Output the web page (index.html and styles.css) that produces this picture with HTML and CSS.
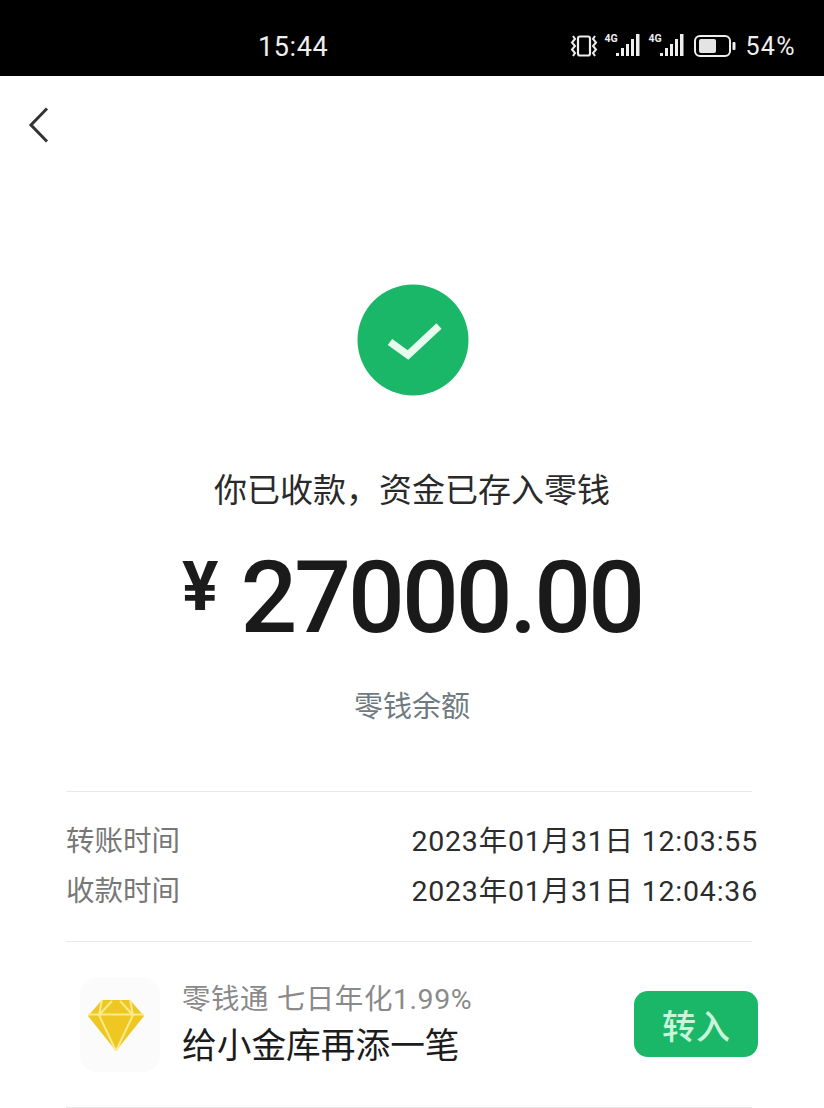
FILE: index.html
```html
<!DOCTYPE html>
<html lang="zh">
<head>
<meta charset="utf-8">
<title>收款</title>
<link rel="stylesheet" href="styles.css">
</head>
<body>
<div class="page">
  <header class="status">
    <span class="time">15:44</span>
    <div class="status-right">
      <svg class="ic-vib" viewBox="0 0 30 24" width="30" height="24"><g fill="none" stroke="#eee"><rect x="9" y="2.500" width="12" height="19" rx="2" stroke-width="2.200"/><path d="M4 2l2 3-3 3.500 3 3.500-3 3.500 3 3.500-2 3M26 2l-2 3 3 3.500-3 3.500 3 3.500-3 3.500 2 3" stroke-width="2"/></g></svg>
      <div class="sig">
        <span class="g4">4G</span>
        <svg viewBox="0 0 24 24" width="24" height="24"><g fill="#eee"><rect x="0" y="19" width="3" height="3"/><rect x="5" y="14" width="3" height="8"/><rect x="10" y="10" width="3" height="12"/><rect x="15" y="5" width="3" height="17"/><rect x="20" y="0" width="3.500" height="22"/></g></svg>
      </div>
      <div class="sig">
        <span class="g4">4G</span>
        <svg viewBox="0 0 24 24" width="24" height="24"><g fill="#eee"><rect x="0" y="19" width="3" height="3"/><rect x="5" y="14" width="3" height="8"/><rect x="10" y="10" width="3" height="12"/><rect x="15" y="5" width="3" height="17"/><rect x="20" y="0" width="3.500" height="22"/></g></svg>
      </div>
      <svg class="ic-bat" viewBox="0 0 42 22" width="42" height="22"><rect x="1" y="1" width="35" height="20" rx="5" fill="none" stroke="#eee" stroke-width="2"/><rect x="5" y="4" width="17" height="14" rx="2" fill="#e4e4e4"/><rect x="38.500" y="7" width="3" height="8" rx="1" fill="#eee"/></svg>
      <span class="pct">54%</span>
    </div>
  </header>

  <nav class="nav">
    <svg viewBox="0 0 22 38" width="22" height="38"><path d="M19 2.500L3 19l16 16.500" fill="none" stroke="#333" stroke-width="3"/></svg>
  </nav>

  <main class="main">
    <svg class="ok" viewBox="0 0 112 112" width="112" height="112"><circle cx="56" cy="56" r="55.500" fill="#1bb768"/><path d="M33 58L51 71 82 42" fill="none" stroke="#e6fbee" stroke-width="7.500"/></svg>
    <p class="title">你已收款，资金已存入零钱</p>
    <div class="amount"><span class="yen">¥</span><span class="num">27000.00</span></div>
    <p class="balance">零钱余额</p>
  </main>

  <section class="times">
    <div class="row"><span class="k">转账时间</span><span class="v">2023年01月31日 12:03:55</span></div>
    <div class="row"><span class="k">收款时间</span><span class="v">2023年01月31日 12:04:36</span></div>
  </section>

  <section class="promo">
    <div class="tile">
      <svg viewBox="0 0 56 52" width="56" height="52"><path d="M14 1h28l14 16-28 35L0 17z" fill="#eec722"/><path d="M0 15.500h56M14 1l-3 15 17 36 17-36-3-15M11 16L24 2M45 16L32 2" fill="none" stroke="#fbeb8a" stroke-width="2"/></svg>
    </div>
    <div class="info">
      <p class="sub">零钱通 七日年化1.99%</p>
      <p class="head">给小金库再添一笔</p>
    </div>
    <button class="btn" type="button">转入</button>
  </section>
</div>
</body>
</html>
```
FILE: styles.css
```css
* { box-sizing: border-box; }
html, body { margin: 0; padding: 0; background: #fff; }
body { font-family: "Roboto", "Noto Sans CJK SC", sans-serif; color: #1c1c1c; }
p { margin: 0; }
.page { width: 824px; height: 1108px; overflow: hidden; }

.status { height: 76px; background: #000; color: #eee; display: flex; align-items: center; padding: 0 28px 0 258px; justify-content: space-between; }
.time { font-size: 27px; font-weight: 400; line-height: 1; margin-top: 19px; letter-spacing: .6px; }
.status-right { display: flex; align-items: center; margin-top: 16px; }
.sig { display: flex; position: relative; width: 36px; height: 24px; justify-content: flex-end; margin-left: 8px; }
.ic-vib + .sig { margin-left: 5px; }
.g4 { position: absolute; left: 0; top: 0; font-size: 10.500px; font-weight: 700; line-height: 1; }
.ic-bat { margin-left: 10px; }
.pct { font-size: 25px; font-weight: 400; line-height: 1; margin-left: 9px; letter-spacing: 1.400px; }

.nav { height: 100px; padding: 30px 0 0 28px; }

.main { display: flex; flex-direction: column; align-items: center; padding-top: 108px; }
.ok { display: block; margin-left: 1px; }
.title { font-size: 33px; line-height: 44px; margin-top: 73px; color: #2a2a2a; }
.amount { display: flex; align-items: baseline; margin-top: 25px; line-height: 120px; height: 120px; }
.yen { font-size: 68px; font-weight: 700; margin-right: 22px; position: relative; top: -22px; }
.num { font-size: 100px; font-weight: 500; letter-spacing: -3px; color: #1a1a1a; }
.balance { font-size: 29px; line-height: 40px; margin-top: 29px; color: #6f7a80; }

.times { margin: 64px 72px 0 66px; padding: 21px 0 25px; border-top: 1px solid #e8e8e8; border-bottom: 1px solid #e8e8e8; height: 151px; }
.row { display: flex; justify-content: space-between; align-items: center; height: 50px; width: 692px; }
.k { font-size: 28.500px; color: #777; }
.v { font-size: 28.500px; color: #2c2c2c; letter-spacing: .8px; }

.promo { margin: 0 72px 0 66px; height: 166px; border-bottom: 1px solid #e8e8e8; display: flex; align-items: flex-start; padding-top: 36px; width: 686px; position: relative; }
.tile { width: 80px; height: 94px; background: #fbfbfb; border-radius: 16px; display: flex; align-items: center; padding-left: 8px; margin-left: 14px; flex: none; }
.info { margin-left: 22px; flex: 1; }
.sub { font-size: 28.500px; line-height: 44px; color: #8a8a8a; letter-spacing: .55px; }
.head { font-size: 34.700px; line-height: 48px; color: #1c1c1c; }
.btn { position: absolute; left: 568px; top: 49px; width: 124px; height: 66px; border: 0; border-radius: 14px; background: #1bb768; color: #c9f5da; font: 500 34px "Noto Sans CJK SC", sans-serif; }
```
